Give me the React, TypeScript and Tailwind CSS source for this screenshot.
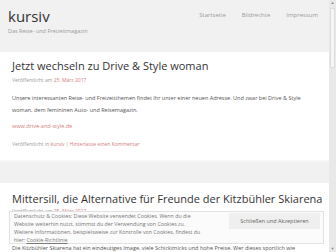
import React from "react";

export default function App() {
  const font = { fontFamily: '"Open Sans", "Noto Sans", sans-serif' };
  return (
    <div className="relative w-[336px] h-[252px] overflow-hidden bg-white flex" style={font}>
      <div className="w-[329px] flex flex-col">
        <header className="h-[52px] bg-[#f1f1f1] flex justify-between px-[8px]">
          <div className="pt-[7px]">
            <div className="text-[15px] leading-[18px] text-[#333]">kursiv</div>
            <div className="text-[5.5px] leading-[8px] text-[#999] mt-[2px]">Das Reise- und Freizeitmagazin</div>
          </div>
          <nav className="flex gap-[16px] pt-[11px] pr-[3px] text-[6px] text-[#9a9a9a]">
            <span>Startseite</span>
            <span>Bildrechte</span>
            <span>Impressum</span>
          </nav>
        </header>
        <article className="px-[12px] pt-[6px] h-[108px]">
          <h2 className="text-[11px] leading-[16px] text-[#333]">Jetzt wechseln zu Drive &amp; Style woman</h2>
          <div className="text-[5px] leading-[8px] text-[#999] mt-[2px]">
            Veröffentlicht am <span className="text-[#d08080]">25. März 2017</span>
          </div>
          <p className="text-[5.5px] leading-[12px] text-[#555] mt-[8px]">
            Unsere interessanten Reise- und Freizeitthemen findet Ihr unter einer neuen Adresse. Und zwar bei Drive &amp; Style woman, dem femininen Auto- und Reisemagazin.
          </p>
          <p className="text-[5.5px] leading-[8px] text-[#d08080] mt-[6px]">www.drive-and-style.de</p>
          <div className="text-[5px] leading-[8px] text-[#999] mt-[10px]">
            Veröffentlicht in <span className="text-[#d08080]">kursiv</span> | <span className="text-[#d08080]">Hinterlasse einen Kommentar</span>
          </div>
        </article>
        <div className="h-[23px] bg-[#f1f1f1] border-t-2 border-[#f7f7f7]"></div>
        <article className="px-[12px] pt-[8px]">
          <h2 className="text-[11px] leading-[16px] text-[#333] whitespace-nowrap">Mittersill, die Alternative für Freunde der Kitzbühler Skiarena</h2>
          <div className="text-[5px] leading-[6px] text-[#999] mt-[1px]">
            Veröffentlicht am <span className="text-[#d08080]">25. März 2017</span>
          </div>
          <div className="text-[5.5px] leading-[6px] text-[#555] mt-[31px] whitespace-nowrap">
            Die Kitzbühler Skiarena hat ein eindeutiges Image, viele Schickimicks und hohe Preise. Wer dieses sportlich wie
          </div>
        </article>
      </div>
      <div className="absolute left-[9px] top-[211px] w-[315px] h-[33px] bg-[#fbfbfb] border border-[#e2e2e2] flex items-start justify-between pl-[4px] pr-[3px]">
        <div className="text-[5.3px] leading-[8px] text-[#777] whitespace-nowrap">
          Datenschutz &amp; Cookies: Diese Website verwendet Cookies. Wenn du die<br />
          Website weiterhin nutzt, stimmst du der Verwendung von Cookies zu.<br />
          Weitere Informationen, beispielsweise zur Kontrolle von Cookies, findest du<br />
          hier: <span className="underline">Cookie-Richtlinie</span>
        </div>
        <div className="w-[91px] h-[16px] mt-[1px] bg-[#efefef] text-[5.5px] text-[#666] flex items-center justify-center">
          Schließen und Akzeptieren
        </div>
      </div>
      <div className="w-[7px] h-full bg-[#e9e9e9] flex flex-col items-center">
        <div className="text-[4px] leading-[6px] text-[#888]">▲</div>
        <div className="w-[5px] h-[60px] bg-[#f6f6f6] border border-[#dcdcdc] mt-[2px]"></div>
        <div className="flex-1"></div>
        <div className="text-[4px] leading-[6px] text-[#888]">▼</div>
      </div>
    </div>
  );
}
